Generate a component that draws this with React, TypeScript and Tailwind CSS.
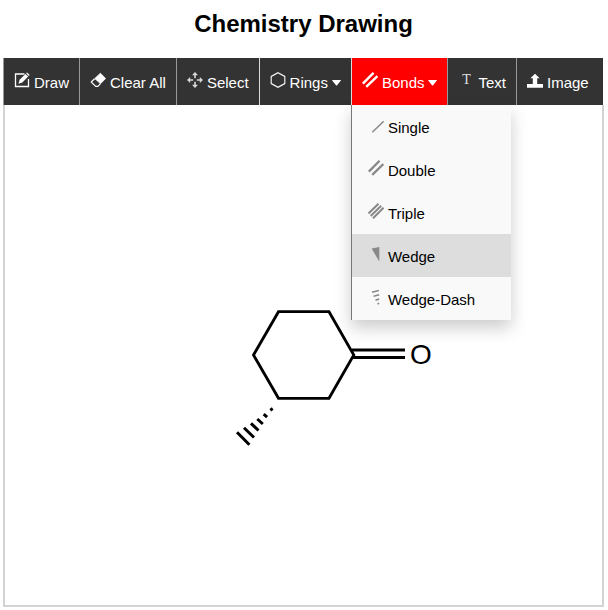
import type { ReactNode } from "react";

function Icon({ className = "", children }: { className?: string; children: ReactNode }) {
  return (
    <svg
      viewBox="0 0 16 16"
      className={`size-4 shrink-0 ${className}`}
      fill="none"
      stroke="currentColor"
      aria-hidden="true"
    >
      {children}
    </svg>
  );
}

function Caret() {
  return (
    <svg viewBox="0 0 9 16" className="h-4 w-[9px] shrink-0" fill="currentColor" aria-hidden="true">
      <path d="M.6 8h7.900c.4 0 .5.4.2.8L5.100 13.300c-.3.4-.8.4-1.100 0L.4 8.800C.1 8.400.2 8 .6 8z" />
    </svg>
  );
}

const drawIcon = (
  <Icon>
    <path d="M10.500 2H1.500v12.500h13V7" strokeWidth="1.300" />
    <path d="M4.500 11.800l1.100-4 5.900-5.900 2.700 2.700-5.900 5.900z" fill="currentColor" stroke="none" />
    <path d="M12.100 1.300l.9-.9 2.700 2.700-.9.9z" fill="currentColor" stroke="none" />
  </Icon>
);

const eraserIcon = (
  <Icon>
    <path d="M10.400 1.200l5.200 5.300-5.100 5.200L4.800 6.600z" fill="currentColor" strokeWidth=".8" strokeLinejoin="round" />
    <path d="M4.600 6.800L1.200 10l4.500 4.400h2.200l2.600-2.700" strokeWidth="1.200" strokeLinejoin="round" />
  </Icon>
);

const moveIcon = (
  <Icon className="text-[#d8d8d8]">
    <path
      d="M8 0l3 3.200H5zM8 16l3-3.200H5zM0 8l3.200-3v6zM16 8l-3.200-3v6z"
      fill="currentColor"
      stroke="none"
    />
    <path d="M8 3v3.200M8 9.800V13M3 8h3.200M9.800 8H13" strokeWidth="1.600" />
  </Icon>
);

const ringIcon = (
  <Icon>
    <path d="M8 .7l6.800 3.700v7.200L8 15.300l-6.800-3.700V4.400z" strokeWidth="1.100" />
  </Icon>
);

const doubleBondPath = "M.8 11.600L11.600.8M4.200 14.900L15.400 4.100";

const bondsIcon = (
  <Icon>
    <path d={doubleBondPath} strokeWidth="2.400" />
  </Icon>
);

const textIcon = (
  <span
    aria-hidden="true"
    className="w-4 text-center font-['Liberation_Serif',serif] text-sm leading-4 text-[#e0e0e0]"
  >
    T
  </span>
);

const imageIcon = (
  <Icon>
    <path d="M8 1.800l4.600 4.400h-2.400V12H16v3.800H0V12h5.800V6.200H3.400z" fill="currentColor" stroke="none" />
  </Icon>
);

const bonds: { name: string; icon: ReactNode }[] = [
  { name: "Single", icon: <path d="M4.300 15.300L15.600 4.300" strokeWidth="1.400" /> },
  { name: "Double", icon: <path d={doubleBondPath} strokeWidth="2.300" /> },
  {
    name: "Triple",
    icon: <path d="M.5 10.500L10.500 .8M2.700 13L13.200 2.700M5 15.300L15.600 4.700" strokeWidth="2" />,
  },
  { name: "Wedge", icon: <path d="M3.600 2.500L11.300 .9V15.500z" fill="currentColor" stroke="none" /> },
  {
    name: "Wedge-Dash",
    icon: <path d="M4 3.200L10.800 1.400M5.500 7.200L11.200 5.800M7.500 11.200L11.200 10M9.500 15L11.200 14.300" strokeWidth="1.600" />,
  },
];

type ToolProps = {
  icon: ReactNode;
  label: string;
  menu?: boolean;
  active?: boolean;
  divider?: string;
};

function Tool({ icon, label, menu, active, divider = "border-[#999]" }: ToolProps) {
  return (
    <button
      type="button"
      aria-haspopup={menu ? "menu" : undefined}
      aria-expanded={menu ? Boolean(active) : undefined}
      className={`flex items-start gap-1 border-r px-2.5 py-3.5 text-white ${divider} ${
        active ? "bg-[#ff0000]" : "hover:bg-[#ff0000]"
      }`}
    >
      {icon}
      <span className="mt-0.5">{label}</span>
      {menu && <Caret />}
    </button>
  );
}

function BondMenu() {
  return (
    <div
      role="menu"
      aria-label="Bonds"
      className="absolute top-full -left-px z-10 w-40 border-l border-[#777] bg-[#f9f9f9] shadow-[0_8px_16px_0_rgba(0,0,0,0.2)]"
    >
      {bonds.map(({ name, icon }) => (
        <button
          key={name}
          type="button"
          role="menuitem"
          className={`flex w-full items-start gap-1 px-4 py-3 text-black ${
            name === "Wedge" ? "bg-[#ddd]" : "hover:bg-[#ddd]"
          }`}
        >
          <Icon className="text-[#888]">{icon}</Icon>
          <span className="mt-0.5">{name}</span>
        </button>
      ))}
    </div>
  );
}

function Molecule() {
  return (
    <svg
      viewBox="0 0 597 500"
      className="block h-[500px] w-full"
      role="img"
      aria-label="3-methylcyclohexanone"
      fill="none"
      stroke="#000"
      strokeWidth="2.800"
    >
      <path d="M248.500 250L273.500 206.700H324L348.800 250L324 293.300H273.500z" />
      <path d="M347 245H400M347 252.500H400" />
      <path
        strokeWidth="3"
        d="M265.300 305.200l2.400-1.600M258.700 309.200l3.400 3M252.300 314l5.500 5M246 318.300l7.500 7.200M239 322.700l10 9.800M232 327.300l12.400 12.500"
      />
      <text
        x="416"
        y="259"
        textAnchor="middle"
        fill="#000"
        stroke="none"
        className="font-['Liberation_Sans',Arial,sans-serif] text-[28px]"
      >
        O
      </text>
    </svg>
  );
}

export default function App() {
  return (
    <main className="mr-1 ml-[3px] bg-white font-['Liberation_Sans',Arial,sans-serif] text-[15px] leading-[17px] text-black">
      <h1 className="pt-2.5 pb-5 text-center text-2xl leading-7 font-bold">Chemistry Drawing</h1>
      <nav aria-label="Drawing tools" className="mr-px flex border-l border-[#999] bg-[#333]">
        <Tool icon={drawIcon} label="Draw" />
        <Tool icon={eraserIcon} label="Clear All" />
        <Tool icon={moveIcon} label="Select" divider="border-[#ddd]" />
        <Tool icon={ringIcon} label="Rings" menu divider="border-[#ddd]" />
        <div className="relative flex">
          <Tool icon={bondsIcon} label="Bonds" menu active />
          <BondMenu />
        </div>
        <Tool icon={textIcon} label="Text" />
        <Tool icon={imageIcon} label="Image" divider="border-transparent" />
      </nav>
      <section aria-label="Canvas" className="border-x-2 border-b-2 border-[#d3d3d3]">
        <Molecule />
      </section>
    </main>
  );
}
